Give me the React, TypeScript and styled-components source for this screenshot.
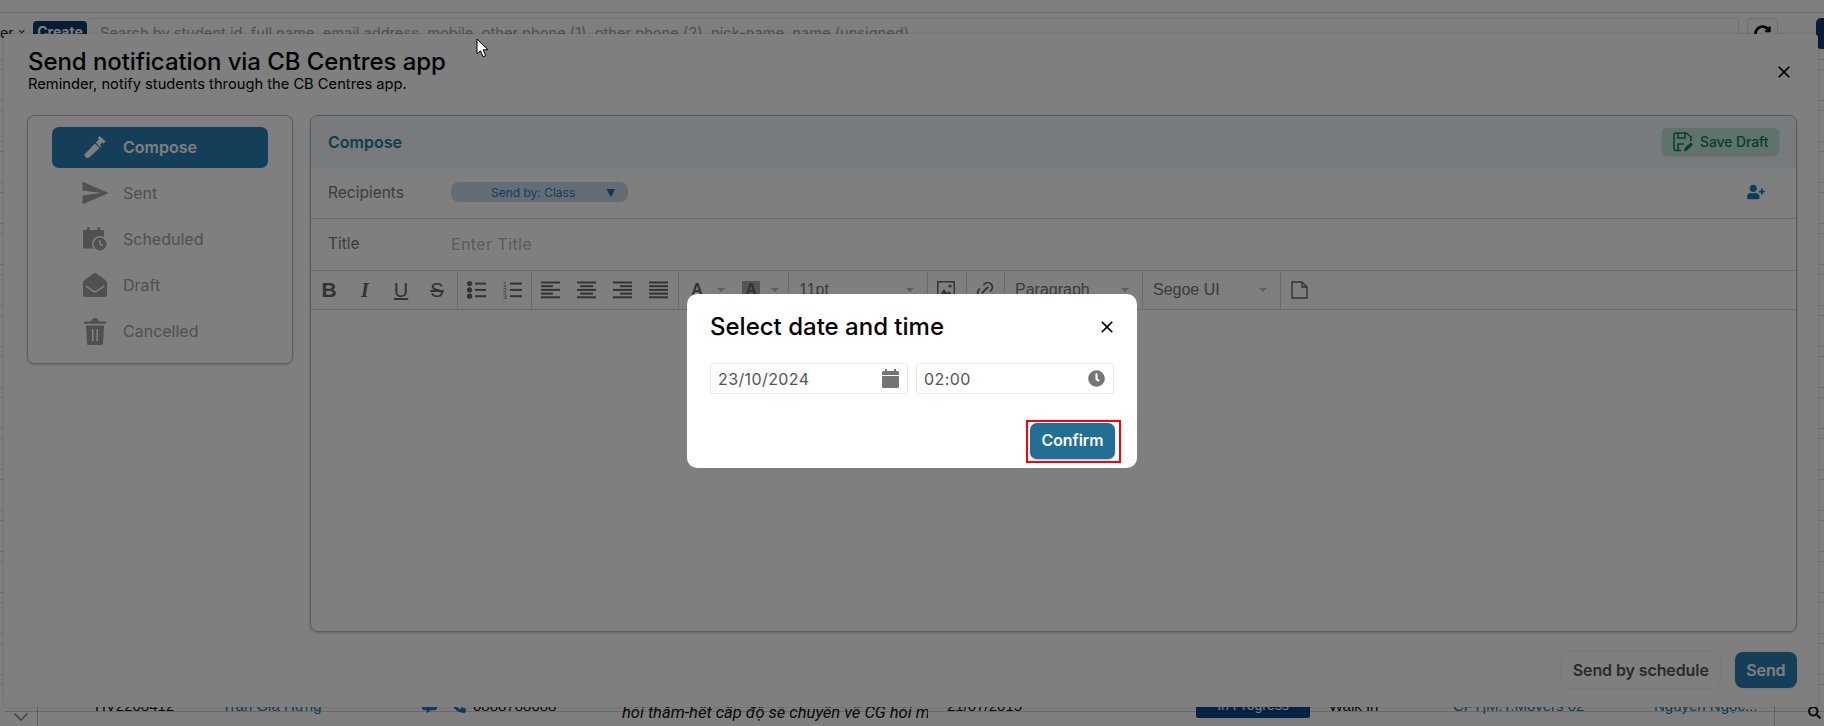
import React from 'react';
import styled, { createGlobalStyle } from 'styled-components';
import { MdSend, MdClose, MdKeyboardArrowDown } from 'react-icons/md';
import { FaEnvelopeOpen, FaUserPlus, FaClock, FaRedoAlt, FaCommentAlt, FaPhoneAlt, FaSearch } from 'react-icons/fa';
import { TbLink } from 'react-icons/tb';

const GlobalStyle = createGlobalStyle`
  html, body { margin: 0; padding: 0; background: #fff; }
  body { font-family: Inter, "Liberation Sans", sans-serif; }
  * { box-sizing: border-box; }
`;

const Screen = styled.div`
  position: relative;
  width: 1824px;
  height: 726px;
  overflow: hidden;
  background: #fff;
`;

/* page behind the dialogs */
const PageTop = styled.div`
  height: 13px;
  border-bottom: 1px solid #d8d8d8;
`;
const SearchRow = styled.div`
  display: flex;
  align-items: flex-start;
  height: 36px;
  margin-top: 5px;
`;
const FilterText = styled.span`
  display: flex;
  flex: 0 0 33px;
  min-width: 0;
  overflow: hidden;
  justify-content: flex-end;
  gap: 3px;
  padding: 6px 5px 0 0;
  font-family: "Liberation Sans", sans-serif;
  font-size: 15px;
  color: #222;
  white-space: nowrap;
`;
const CreateBtn = styled.span`
  flex: 0 0 54px;
  height: 28px;
  margin-top: 3px;
  padding-top: 2px;
  border-radius: 4px;
  background: #0b3a6b;
  color: #fff;
  font-weight: 700;
  font-size: 14px;
  line-height: 18px;
  text-align: center;
`;
const SearchBox = styled.div`
  flex: 0 0 1652px;
  height: 36px;
  padding: 5px 0 0 13px;
  border: 1px solid #e4e4e4;
  border-left: 0;
  border-radius: 4px;
  color: #a2a2a2;
  font-size: 14.65px;
  white-space: nowrap;
  overflow: hidden;
`;
const RefreshBtn = styled.span`
  display: flex;
  flex: 0 0 31px;
  justify-content: center;
  height: 34px;
  margin-left: 8px;
  padding-top: 6px;
  border: 1px solid #e0e0e0;
  border-radius: 4px;
`;
const NavyTab = styled.span`
  flex: 0 0 20px;
  height: 31px;
  margin-left: 38px;
  border-radius: 5px 0 0 5px;
  background: #0b3a6b;
`;
const TableArea = styled.div`
  height: 637px;
  background: repeating-linear-gradient(
    to bottom,
    #fff 0 5px,
    #e2e2e2 5px 6px,
    #fff 6px 15px,
    #e2e2e2 15px 16px,
    #fff 16px 41px
  );
`;
const TableRow = styled.div`
  position: relative;
  height: 35px;
  display: flex;
  font-family: "Liberation Sans", sans-serif;
  font-size: 15px;
  color: #111;
  &::after {
    content: '';
    position: absolute;
    left: 5px;
    right: 0;
    top: 20px;
    height: 1px;
    background: rgba(0, 0, 0, 0.18);
  }
`;
const RowCell = styled.span<{ $w: number; $pad?: number; $blue?: boolean; $italic?: boolean }>`
  flex: 0 0 ${p => p.$w}px;
  padding-top: ${p => (p.$italic ? 12 : 6)}px;
  padding-left: ${p => p.$pad ?? 0}px;
  white-space: nowrap;
  overflow: hidden;
  color: ${p => (p.$blue ? '#2a7ab0' : '#111')};
  font-style: ${p => (p.$italic ? 'italic' : 'normal')};
  font-size: ${p => (p.$italic ? 16.5 : 15)}px;
  font-family: ${p => (p.$italic ? 'Roboto, sans-serif' : 'inherit')};
`;
const ExpandCell = styled.span`
  flex: 0 0 38px;
  padding: 16px 0 0 14px;
  border-right: 1px solid #c4c4c4;
`;
const ContactIcons = styled.span`
  display: flex;
  flex: 0 0 51px;
  gap: 14px;
  padding-top: 7px;
  font-size: 15px;
  color: #2a7ab0;
`;
const StatusBadge = styled.span`
  flex: 0 0 114px;
  height: 27px;
  border-radius: 2px;
  background: #0b4a8f;
  color: #fff;
  text-align: center;
  padding-top: 6px;
  font-size: 14px;
`;
const ToolCell = styled.span`
  display: flex;
  flex: 0 0 50px;
  justify-content: flex-end;
  padding: 15px 3px 0 0;
  border-left: 1px solid #c4c4c4;
  font-size: 13px;
  color: #222;
`;

/* notification modal */
const Modal = styled.div`
  position: absolute;
  left: 4px;
  top: 34px;
  width: 1814px;
  height: 673px;
  display: flex;
  flex-direction: column;
  background: #fff;
  border-radius: 4px;
  box-shadow: 0 0 3px rgba(0, 0, 0, 0.2);
`;
const ModalHeader = styled.header`
  display: flex;
  justify-content: space-between;
  align-items: flex-start;
  height: 81px;
  padding: 13px 24px 0 24px;
`;
const ModalTitle = styled.h1`
  margin: 0;
  font-size: 24px;
  line-height: 29px;
  font-weight: 500;
  letter-spacing: -0.07px;
  color: #000;
`;
const ModalSub = styled.p`
  margin: 0;
  font-size: 14.7px;
  line-height: 17px;
  color: #000;
`;
const CloseBtn = styled.span<{ $size: number; $top: number }>`
  display: flex;
  margin-top: ${p => p.$top}px;
  color: #000;
  font-size: ${p => p.$size}px;
`;
const ModalBody = styled.div`
  display: flex;
  align-items: flex-start;
  gap: 17px;
  padding: 0 21px 0 23px;
`;
const SideNav = styled.nav`
  flex: 0 0 266px;
  display: flex;
  flex-direction: column;
  gap: 5px;
  padding: 11px 24px;
  border: 1px solid #bcbcbc;
  border-radius: 8px;
  box-shadow: 0 1px 3px rgba(0, 0, 0, 0.2);
`;
const NavItem = styled.div<{ $active?: boolean }>`
  display: flex;
  align-items: center;
  gap: 13px;
  height: 41px;
  padding: 0 0 1px 28px;
  border-radius: 7px;
  background: ${p => (p.$active ? '#2a7fb0' : 'transparent')};
  color: ${p => (p.$active ? '#fff' : '#a0a0a0')};
  font-size: 16px;
  font-weight: ${p => (p.$active ? 600 : 400)};
`;
const NavIcon = styled.span<{ $size: number }>`
  display: flex;
  justify-content: center;
  align-items: center;
  width: 30px;
  font-size: ${p => p.$size}px;
`;
const MainPanel = styled.section`
  flex: 1;
  height: 517px;
  border: 1px solid #b4b4b4;
  border-radius: 8px;
  box-shadow: 0 1px 3px rgba(0, 0, 0, 0.2);
  overflow: hidden;
`;
const PanelHead = styled.div`
  display: flex;
  justify-content: space-between;
  align-items: center;
  height: 52px;
  padding: 0 17px 1px 17px;
  background: #f0f7fc;
`;
const PanelTitle = styled.span`
  font-size: 16px;
  font-weight: 600;
  color: #1b7a96;
`;
const SaveDraft = styled.span`
  display: flex;
  align-items: center;
  gap: 7px;
  width: 117px;
  height: 27px;
  padding-left: 11px;
  border-radius: 5px;
  background: #bfe5d8;
  box-shadow: 0 1px 2px rgba(0, 0, 0, 0.15);
  color: #0f7a55;
  font-size: 13.8px;
  font-weight: 500;
`;
const FieldRow = styled.div<{ $h: number }>`
  display: flex;
  align-items: center;
  height: ${p => p.$h}px;
  padding: 0 31px 2px 17px;
  border-bottom: 1px solid #d6d6d6;
`;
const FieldLabel = styled.span`
  flex: 0 0 123px;
  font-size: 15.5px;
  color: #777;
`;
const SendByChip = styled.span`
  display: flex;
  align-items: center;
  justify-content: space-between;
  width: 177px;
  height: 20px;
  padding: 0 13px 0 40px;
  border-radius: 8px;
  background: #c9dbe9;
  color: #2a7ab8;
  font-size: 12px;
`;
const ChipArrow = styled.span`
  font-family: "DejaVu Sans", sans-serif;
  font-size: 11px;
  color: #1d6fa8;
`;
const AddPerson = styled.span`
  display: flex;
  margin-left: auto;
  color: #1b7fa8;
  font-size: 18px;
`;
const TitleInput = styled.input`
  flex: 1;
  border: 0;
  outline: 0;
  padding: 0;
  font: 400 16px Inter, sans-serif;
  letter-spacing: 0.4px;
  &::placeholder { color: #b8b8b8; opacity: 1; }
`;
const Toolbar = styled.div`
  display: flex;
  height: 39px;
  border-bottom: 1px solid #d6d6d6;
  font-family: "Liberation Sans", sans-serif;
  color: #666;
`;
const ToolGroup = styled.div<{ $w: number }>`
  display: flex;
  flex: 0 0 ${p => p.$w}px;
  align-items: center;
  border-right: 1px solid #d6d6d6;
`;
const LastGroup = styled.div`
  display: flex;
  align-items: center;
`;
const ToolBtn = styled.span`
  display: flex;
  justify-content: center;
  align-items: center;
  width: 36px;
  height: 38px;
  font-size: 22px;
  color: #666;
`;
const FormatGlyph = styled.span<{ $kind: 'b' | 'i' | 'u' | 's' }>`
  font-family: ${p => (p.$kind === 'i' ? '"Liberation Serif", serif' : '"Liberation Sans", sans-serif')};
  font-size: ${p => (p.$kind === 'b' ? 21 : 20)}px;
  font-weight: ${p => (p.$kind === 'u' || p.$kind === 's' ? 400 : 700)};
  font-style: ${p => (p.$kind === 'i' ? 'italic' : 'normal')};
  text-decoration: ${p => (p.$kind === 'u' ? 'underline' : p.$kind === 's' ? 'line-through' : 'none')};
  text-underline-offset: 1px;
  color: #666;
`;
const LinesIcon = styled.svg`
  width: 19px;
  height: 18px;
  fill: #666;
`;
const ColorBtn = styled.span`
  display: flex;
  align-items: center;
  gap: 11px;
  width: 54px;
  padding-left: 9px;
  font-size: 16px;
  font-weight: 700;
  color: #666;
`;
const ColorGlyph = styled.span<{ $hl?: boolean }>`
  width: 18px;
  height: 18px;
  line-height: 18px;
  text-align: center;
  background: ${p => (p.$hl ? '#aaa' : 'transparent')};
`;
const Caret = styled.span`
  width: 0;
  height: 0;
  border-left: 4px solid transparent;
  border-right: 4px solid transparent;
  border-top: 4px solid #bbb;
`;
const SelectBox = styled.div`
  display: flex;
  flex: 1;
  align-items: center;
  justify-content: space-between;
  padding: 0 13px 0 10px;
  font-size: 16px;
  color: #777;
`;
const ModalFooter = styled.footer`
  display: flex;
  justify-content: flex-end;
  gap: 15px;
  margin-top: 20px;
  padding-right: 21px;
`;
const Btn = styled.span<{ $primary?: boolean }>`
  display: flex;
  align-items: center;
  justify-content: center;
  height: 36px;
  padding: 0 ${p => (p.$primary ? 11.5 : 11)}px;
  border-radius: 8px;
  background: ${p => (p.$primary ? '#2a7fb0' : '#fff')};
  color: ${p => (p.$primary ? '#fff' : '#555')};
  font-size: 16px;
  font-weight: 600;
  letter-spacing: -0.1px;
  box-shadow: 0 0 3px rgba(0, 0, 0, 0.12);
`;

/* date and time dialog */
const Backdrop = styled.div`
  position: absolute;
  inset: 0;
  display: flex;
  justify-content: center;
  align-items: flex-start;
  padding-top: 294px;
  background: rgba(0, 0, 0, 0.5);
`;
const Dialog = styled.div`
  width: 450px;
  height: 174px;
  padding: 0 16px 5px 23px;
  display: flex;
  flex-direction: column;
  background: #fff;
  border-radius: 10px;
`;
const DialogHead = styled.div`
  display: flex;
  justify-content: space-between;
  align-items: center;
  height: 65px;
  margin-bottom: 4px;
  padding-right: 4px;
`;
const DialogTitle = styled.h2`
  margin: 0;
  font-size: 24px;
  font-weight: 500;
  color: #000;
`;
const DateRow = styled.div`
  display: flex;
  gap: 8px;
  padding-right: 7px;
`;
const DateField = styled.div`
  display: flex;
  flex: 0 0 198px;
  align-items: center;
  justify-content: space-between;
  height: 31px;
  padding: 0 8px 0 7px;
  border: 1px solid #e9e9e9;
  border-radius: 3px;
  font-size: 16px;
  letter-spacing: 0.4px;
  color: #555;
`;
const FieldIcon = styled.span`
  display: flex;
  font-size: 17px;
  color: #757575;
`;
const DialogFoot = styled.div`
  display: flex;
  justify-content: flex-end;
  margin-top: auto;
`;
const RedFrame = styled.div`
  padding: 1px 4px 2px 2px;
  border: 2px solid #f00;
`;
const Confirm = styled.span`
  display: flex;
  align-items: center;
  justify-content: center;
  width: 85px;
  height: 36px;
  padding-bottom: 1px;
  border-radius: 7px;
  background: #236e96;
  box-shadow: 0 1px 2px rgba(0, 0, 0, 0.3);
  color: #fff;
  font-size: 15.8px;
  font-weight: 600;
`;
const Pointer = styled.svg`
  position: absolute;
  left: 476px;
  top: 38px;
  width: 13px;
  height: 20px;
`;

const alignPaths: Record<string, number[][]> = {
  left: [[0, 19], [0, 12], [0, 19], [0, 12], [0, 19]],
  center: [[0, 19], [3, 13], [0, 19], [3, 13], [0, 19]],
  right: [[0, 19], [7, 12], [0, 19], [7, 12], [0, 19]],
  full: [[0, 19], [0, 19], [0, 19], [0, 19], [0, 19]],
};

const AlignIcon = ({ kind }: { kind: string }) => (
  <LinesIcon viewBox="0 0 19 18">
    {alignPaths[kind].map(([x, w], i) => (
      <rect key={i} x={x} y={0.5 + i * 3.7} width={w} height={2} />
    ))}
  </LinesIcon>
);

const BulletList = () => (
  <LinesIcon viewBox="0 0 19 18">
    {[0, 1, 2].map(i => (
      <g key={i}>
        <circle cx="2.6" cy={2.6 + i * 6.3} r="2.6" />
        <rect x="8" y={1.6 + i * 6.3} width="11" height="2" />
      </g>
    ))}
  </LinesIcon>
);

const NumberList = () => (
  <LinesIcon viewBox="0 0 19 18">
    {[0, 1, 2].map(i => (
      <g key={i}>
        <text x="0" y={5.5 + i * 6} fontSize="6.5" fontFamily="Liberation Sans, sans-serif">
          {i + 1}
        </text>
        <rect x="7" y={1.6 + i * 6.3} width="12" height="2" />
      </g>
    ))}
  </LinesIcon>
);

const ImageIcon = () => (
  <svg width="18" height="18" viewBox="0 0 18 18" fill="#666">
    <rect x="0.75" y="0.75" width="16.5" height="16.5" fill="none" stroke="#666" strokeWidth="1.5" />
    <path d="M2 15l5-7 3 4 2-2 4 5z" />
    <circle cx="13" cy="5" r="1.6" />
  </svg>
);

const PageIcon = () => (
  <svg width="17" height="18" viewBox="0 0 17 18" fill="none" stroke="#666" strokeWidth="1.4">
    <path d="M1 1h10l5 5v11H1z" />
    <path d="M11 1v5h5" />
  </svg>
);

const PenIcon = () => (
  <svg width="22" height="22" viewBox="0 0 22 22" fill="currentColor">
    <path d="M0.5 18.5L11 7.5l4.5 4.5L5 21.5c-1 .9-2 .7-2.8 0L1 20.2c-.8-.8-1-1 -.5-1.7z" />
    <path d="M12 6.5l3-3.2L13.8 2 15.6 0l6 5.6-2 2-1.2-1.2-2.6 2.8 1.4 1.4-1 1z" />
  </svg>
);

const CalendarClock = () => (
  <svg width="25" height="25" viewBox="0 0 25 25">
    <path fill="currentColor" d="M0 3h4V0h2.500v3h8V0H17v3h4v18.500H0z" />
    <circle cx="17" cy="17" r="8" fill="#fff" />
    <circle cx="17" cy="17" r="6.4" fill="currentColor" />
    <path d="M16.2 13h1.6v3.6l2.6 1.5-.8 1.3-3.4-2z" fill="#fff" />
  </svg>
);

const TrashIcon = () => (
  <svg width="22" height="28" viewBox="0 0 22 28" fill="currentColor">
    <path d="M0 4.500h7C8 1.800 9.400 1 11 1s3 .8 4 3.500h7v2.200H0z" />
    <path d="M2 8.500h18l-1 18c0 .8-.6 1.500-1.400 1.500H4.400c-.8 0-1.400-.7-1.400-1.500zM8 12v12h1.600V12zm4.400 0v12H14V12z" fillRule="evenodd" />
  </svg>
);

const CalendarSolid = () => (
  <svg width="17" height="19" viewBox="0 0 17 19" fill="#757575">
    <path d="M3 0h2v2h7V0h2v2h1.500c.8 0 1.500.7 1.500 1.500V6H0V3.500C0 2.700.7 2 1.500 2H3z" />
    <path d="M0 7h17v10.500c0 .8-.7 1.500-1.500 1.500h-14C.7 19 0 18.300 0 17.500z" />
  </svg>
);

const FloppyPen = () => (
  <svg width="20" height="20" viewBox="0 0 20 20" fill="none" stroke="currentColor" strokeWidth="1.5">
    <path d="M8 18.500H3a2 2 0 0 1-2-2V3a2 2 0 0 1 2-2h10l5 4v4" />
    <path d="M5 1v5h7V1M5 18v-6h6" />
    <path d="M11 19.500l1-4 6-5 2 2-6 6z" fill="currentColor" stroke="none" />
  </svg>
);

const ExpandChevron = () => (
  <svg width="14" height="8" viewBox="0 0 14 8" fill="none" stroke="#777" strokeWidth="1.3">
    <path d="M0.500 0.500L7 7l6.500-6.500" />
  </svg>
);

const navItems = [
  { label: 'Compose', icon: <PenIcon />, size: 22, active: true },
  { label: 'Sent', icon: <MdSend />, size: 32 },
  { label: 'Scheduled', icon: <CalendarClock />, size: 25 },
  { label: 'Draft', icon: <FaEnvelopeOpen />, size: 24 },
  { label: 'Cancelled', icon: <TrashIcon />, size: 28 },
];

export default function App() {
  return (
    <Screen>
      <GlobalStyle />
      <PageTop />
      <SearchRow>
        <FilterText>
          er <MdKeyboardArrowDown />
        </FilterText>
        <CreateBtn>Create</CreateBtn>
        <SearchBox>Search by student id, full name, email address, mobile, other phone (1), other phone (2), pick-name, name (unsigned)</SearchBox>
        <RefreshBtn>
          <FaRedoAlt size={17} color="#000" />
        </RefreshBtn>
        <NavyTab />
      </SearchRow>
      <TableArea />
      <TableRow>
        <ExpandCell>
          <ExpandChevron />
        </ExpandCell>
        <RowCell $w={57} />
        <RowCell $w={127}>HV2208412</RowCell>
        <RowCell $w={200} $blue>Trần Gia Hưng</RowCell>
        <ContactIcons>
          <FaCommentAlt />
          <FaPhoneAlt />
        </ContactIcons>
        <RowCell $w={149}>0888788088</RowCell>
        <RowCell $w={306} $italic>hỏi thăm-hết cấp độ sẽ chuyển về CG hỏi mẹ</RowCell>
        <RowCell $w={268} $pad={19}>21/07/2015</RowCell>
        <StatusBadge>In Progress</StatusBadge>
        <RowCell $w={143} $pad={19}>Walk In</RowCell>
        <RowCell $w={201} $blue>CFT|M.T.Movers 02</RowCell>
        <RowCell $w={120} $blue>Nguyễn Ngọc...</RowCell>
        <ToolCell>
          <FaSearch />
        </ToolCell>
      </TableRow>

      <Modal>
        <ModalHeader>
          <div>
            <ModalTitle>Send notification via CB Centres app</ModalTitle>
            <ModalSub>Reminder, notify students through the CB Centres app.</ModalSub>
          </div>
          <CloseBtn $size={20} $top={15}>
            <MdClose />
          </CloseBtn>
        </ModalHeader>
        <ModalBody>
          <SideNav>
            {navItems.map(item => (
              <NavItem key={item.label} $active={item.active}>
                <NavIcon $size={item.size}>{item.icon}</NavIcon>
                {item.label}
              </NavItem>
            ))}
          </SideNav>
          <MainPanel>
            <PanelHead>
              <PanelTitle>Compose</PanelTitle>
              <SaveDraft>
                <FloppyPen />
                Save Draft
              </SaveDraft>
            </PanelHead>
            <FieldRow $h={51}>
              <FieldLabel>Recipients</FieldLabel>
              <SendByChip>
                Send by: Class
                <ChipArrow>▼</ChipArrow>
              </SendByChip>
              <AddPerson>
                <FaUserPlus />
              </AddPerson>
            </FieldRow>
            <FieldRow $h={52}>
              <FieldLabel>Title</FieldLabel>
              <TitleInput placeholder="Enter Title" />
            </FieldRow>
            <Toolbar>
              <ToolGroup $w={147}>
                <ToolBtn><FormatGlyph $kind="b">B</FormatGlyph></ToolBtn>
                <ToolBtn><FormatGlyph $kind="i">I</FormatGlyph></ToolBtn>
                <ToolBtn><FormatGlyph $kind="u">U</FormatGlyph></ToolBtn>
                <ToolBtn><FormatGlyph $kind="s">S</FormatGlyph></ToolBtn>
              </ToolGroup>
              <ToolGroup $w={74}>
                <ToolBtn><BulletList /></ToolBtn>
                <ToolBtn><NumberList /></ToolBtn>
              </ToolGroup>
              <ToolGroup $w={147}>
                <ToolBtn><AlignIcon kind="left" /></ToolBtn>
                <ToolBtn><AlignIcon kind="center" /></ToolBtn>
                <ToolBtn><AlignIcon kind="right" /></ToolBtn>
                <ToolBtn><AlignIcon kind="full" /></ToolBtn>
              </ToolGroup>
              <ToolGroup $w={110}>
                <ColorBtn><ColorGlyph>A</ColorGlyph><Caret /></ColorBtn>
                <ColorBtn><ColorGlyph $hl>A</ColorGlyph><Caret /></ColorBtn>
              </ToolGroup>
              <ToolGroup $w={139}>
                <SelectBox>11pt<Caret /></SelectBox>
              </ToolGroup>
              <ToolGroup $w={39}>
                <ToolBtn><ImageIcon /></ToolBtn>
              </ToolGroup>
              <ToolGroup $w={38}>
                <ToolBtn><TbLink /></ToolBtn>
              </ToolGroup>
              <ToolGroup $w={138}>
                <SelectBox>Paragraph<Caret /></SelectBox>
              </ToolGroup>
              <ToolGroup $w={138}>
                <SelectBox>Segoe UI<Caret /></SelectBox>
              </ToolGroup>
              <LastGroup>
                <ToolBtn><PageIcon /></ToolBtn>
              </LastGroup>
            </Toolbar>
          </MainPanel>
        </ModalBody>
        <ModalFooter>
          <Btn>Send by schedule</Btn>
          <Btn $primary>Send</Btn>
        </ModalFooter>
      </Modal>

      <Backdrop>
        <Dialog>
          <DialogHead>
            <DialogTitle>Select date and time</DialogTitle>
            <CloseBtn $size={20} $top={0}>
              <MdClose />
            </CloseBtn>
          </DialogHead>
          <DateRow>
            <DateField>
              23/10/2024
              <CalendarSolid />
            </DateField>
            <DateField>
              02:00
              <FieldIcon><FaClock /></FieldIcon>
            </DateField>
          </DateRow>
          <DialogFoot>
            <RedFrame>
              <Confirm>Confirm</Confirm>
            </RedFrame>
          </DialogFoot>
        </Dialog>
      </Backdrop>

      <Pointer viewBox="0 0 13 20">
        <path d="M1 1v15l3.500-3.200 2.600 6 2.600-1.100-2.600-5.900H12z" fill="#fff" stroke="#000" strokeWidth="1" />
      </Pointer>
    </Screen>
  );
}
